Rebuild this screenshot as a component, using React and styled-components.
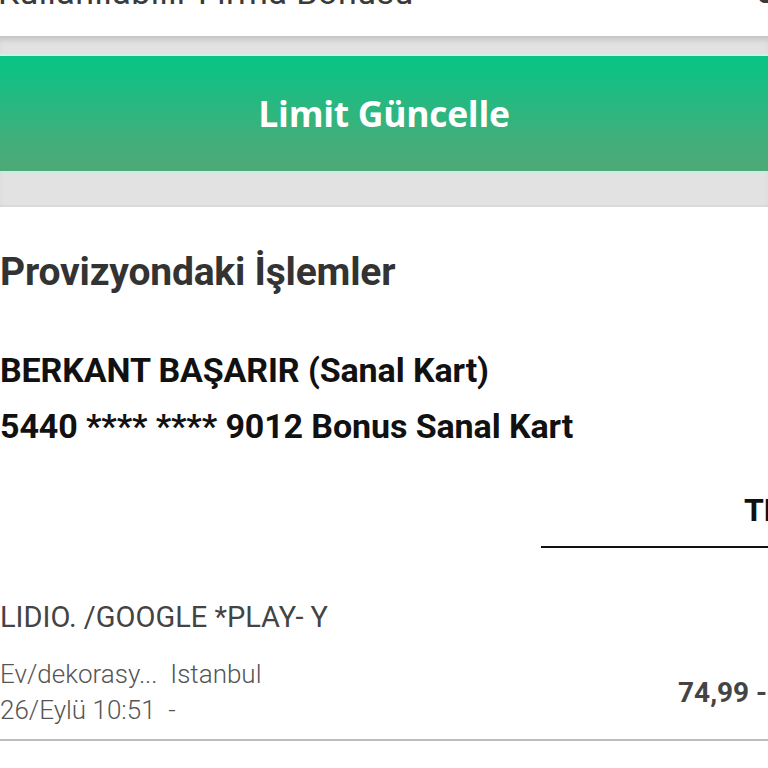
import React from "react";
import styled, { createGlobalStyle } from "styled-components";

const GlobalStyle = createGlobalStyle`
  html, body {
    margin: 0;
    padding: 0;
    background: #ffffff;
    overflow: hidden;
  }
  body {
    font-family: Roboto, "Noto Sans", Arial, sans-serif;
  }
`;

const Page = styled.div`
  width: 768px;
  height: 768px;
  display: flex;
  flex-direction: column;
  overflow: hidden;
  background: #fff;
`;

const SummaryRow = styled.div`
  height: 36px;
  flex: none;
  display: flex;
  justify-content: space-between;
  align-items: flex-start;
  overflow: hidden;
  background: #fff;
`;

const SummaryLabel = styled.span`
  font-size: 34px;
  line-height: 34px;
  letter-spacing: 0.5px;
  color: #3a3a3a;
  margin-top: -25px;
  margin-left: -2px;
  white-space: nowrap;
`;

const SummaryValue = styled.span`
  font-size: 34px;
  line-height: 34px;
  font-weight: 700;
  color: #3a3a3a;
  margin-top: -26px;
  margin-right: -58px;
  width: 70px;
  white-space: nowrap;
`;

const ButtonBand = styled.div`
  flex: none;
  background: #e2e2e2;
  padding: 18px 0 34px;
  box-shadow: inset 0 7px 7px -4px rgba(0, 0, 0, 0.16), inset 0 -2px 0 #dadada;
`;

const UpdateButton = styled.button`
  display: flex;
  align-items: center;
  justify-content: center;
  width: 100%;
  height: 119px;
  border: 0;
  border-top: 2px solid #d6efe4;
  border-bottom: 2px solid #cdeadc;
  background: linear-gradient(180deg, #07c587 0%, #22ba81 35%, #3fb07b 70%, #4ea977 100%);
  color: #fff;
  font-family: "Open Sans", Lato, sans-serif;
  font-weight: 700;
  font-size: 35.5px;
  letter-spacing: -0.3px;
  padding: 0;
  padding-bottom: 2px;
`;

const Section = styled.section`
  flex: none;
  width: 828px;
  display: flex;
  flex-direction: column;
`;

const SectionTitle = styled.h2`
  margin: 44px 0 0;
  font-size: 39px;
  line-height: 42px;
  font-weight: 700;
  color: #333;
  letter-spacing: -0.2px;
`;

const CardInfo = styled.div`
  margin-top: 56px;
  display: flex;
  flex-direction: column;
  gap: 14px;
`;

const CardLine = styled.div`
  font-size: 34px;
  line-height: 42px;
  font-weight: 700;
  color: #111;
  white-space: nowrap;
  letter-spacing: -0.1px;
`;

const TableHead = styled.div`
  margin-top: 43px;
  display: grid;
  grid-template-columns: 541px 1fr;
`;

const HeadCell = styled.div`
  grid-column: 2;
  border-bottom: 2px solid #111;
  padding: 0 0 16px 203px;
  font-size: 32px;
  line-height: 40px;
  font-weight: 700;
  color: #111;
`;

const TxRow = styled.div`
  margin-top: 51px;
  display: grid;
  grid-template-columns: 678px 1fr;
  align-items: end;
  padding-bottom: 11px;
  border-bottom: 2px solid #bdbdbd;
  width: 768px;
  box-sizing: border-box;
`;

const TxInfo = styled.div`
  display: flex;
  flex-direction: column;
`;

const Merchant = styled.div`
  font-size: 29px;
  line-height: 36px;
  color: #444;
  margin-bottom: 21px;
  white-space: nowrap;
`;

const TxMeta = styled.div`
  font-size: 26px;
  line-height: 36px;
  font-weight: 300;
  color: #555;
  white-space: nowrap;
`;

const Amount = styled.div`
  font-size: 28px;
  line-height: 36px;
  font-weight: 700;
  color: #444;
  white-space: nowrap;
  align-self: center;
  margin-top: 59px;
`;

export default function App() {
  return (
    <>
      <GlobalStyle />
      <Page>
        <SummaryRow>
          <SummaryLabel>Kullanılabilir Firma Bonusu</SummaryLabel>
          <SummaryValue>0,00 TL</SummaryValue>
        </SummaryRow>
        <ButtonBand>
          <UpdateButton>Limit Güncelle</UpdateButton>
        </ButtonBand>
        <Section>
          <SectionTitle>Provizyondaki İşlemler</SectionTitle>
          <CardInfo>
            <CardLine>BERKANT BAŞARIR (Sanal Kart)</CardLine>
            <CardLine>5440 **** **** 9012 Bonus Sanal Kart</CardLine>
          </CardInfo>
          <TableHead>
            <HeadCell>TL</HeadCell>
          </TableHead>
          <TxRow>
            <TxInfo>
              <Merchant>LIDIO. /GOOGLE *PLAY- Y</Merchant>
              <TxMeta>Ev/dekorasy...&nbsp; Istanbul</TxMeta>
              <TxMeta>26/Eylü 10:51 &nbsp;-</TxMeta>
            </TxInfo>
            <Amount>74,99 - TL</Amount>
          </TxRow>
        </Section>
      </Page>
    </>
  );
}
